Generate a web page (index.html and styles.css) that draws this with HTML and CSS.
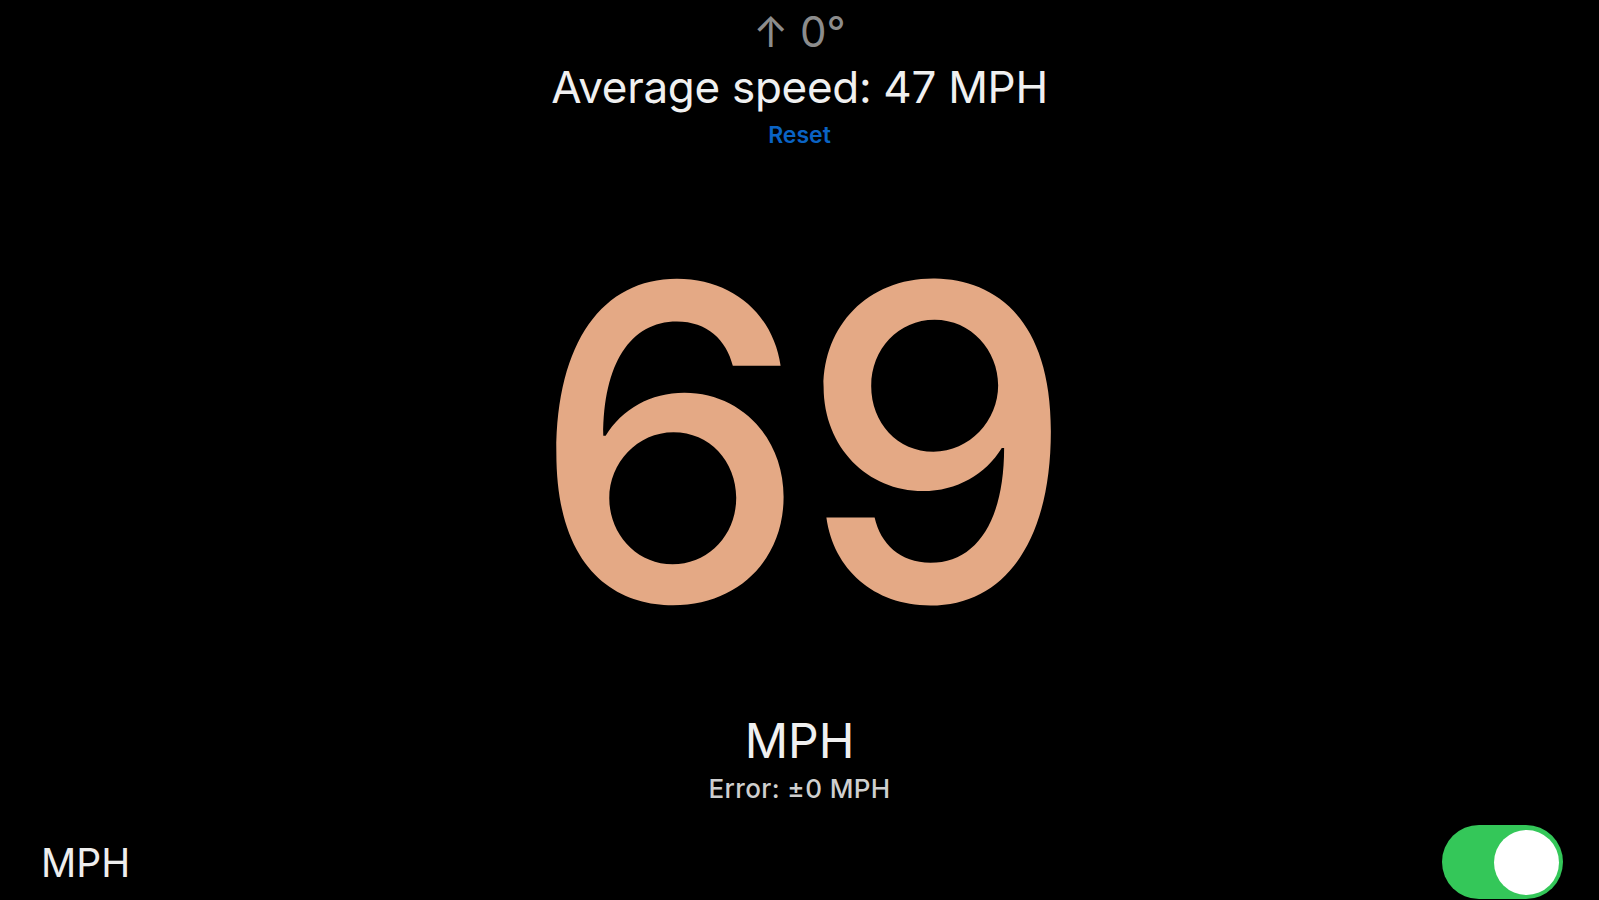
FILE: index.html
```html
<!DOCTYPE html>
<html lang="en">
<head>
<meta charset="utf-8">
<title>Speedometer</title>
<link rel="stylesheet" href="styles.css">
</head>
<body>
<main class="screen">
  <div class="heading">↑ 0°</div>
  <div class="average">Average speed: 47 MPH</div>
  <div class="reset">Reset</div>
  <div class="speed">69</div>
  <div class="unit">MPH</div>
  <div class="error">Error: ±0 MPH</div>
  <div class="bottom">
    <span class="bottom-label">MPH</span>
    <span class="toggle"><span class="knob"></span></span>
  </div>
</main>
</body>
</html>
```

FILE: styles.css
```css
html, body {
  margin: 0;
  padding: 0;
  background: #000;
}
body {
  font-family: Inter, "Liberation Sans", sans-serif;
  color: #f2f2f2;
}
.screen {
  width: 1599px;
  height: 900px;
  display: flex;
  flex-direction: column;
  align-items: center;
  overflow: hidden;
}
.heading {
  margin-top: 11px;
  font-size: 42px;
  line-height: 42px;
  color: #8c8c8c;
}
.average {
  margin-top: 12px;
  font-size: 44px;
  line-height: 44px;
  letter-spacing: -0.3px;
  color: #f0f0f0;
}
.reset {
  margin-top: 15px;
  font-size: 23px;
  line-height: 23px;
  font-weight: 600;
  color: #0a63c4;
}
.speed {
  margin-top: 77px;
  font-size: 437px;
  line-height: 437px;
  font-weight: 500;
  color: #e4a985;
  letter-spacing: -8px;
}
.unit {
  margin-top: 56px;
  font-size: 48px;
  line-height: 48px;
  color: #f0f0f0;
}
.error {
  margin-top: 11px;
  font-size: 26px;
  line-height: 26px;
  font-weight: 500;
  letter-spacing: 0.4px;
  color: #cfcfcf;
}
.bottom {
  margin-top: 23px;
  align-self: stretch;
  display: flex;
  justify-content: space-between;
  align-items: center;
  padding: 0 36px 0 41px;
}
.bottom-label {
  font-size: 39px;
  line-height: 39px;
  color: #eeeeee;
}
.toggle {
  width: 121px;
  height: 74px;
  border-radius: 37px;
  background: #34c759;
  display: flex;
  align-items: center;
  justify-content: flex-end;
  padding: 0 4px;
  box-sizing: border-box;
}
.knob {
  width: 65px;
  height: 65px;
  border-radius: 50%;
  background: #fff;
}
```
